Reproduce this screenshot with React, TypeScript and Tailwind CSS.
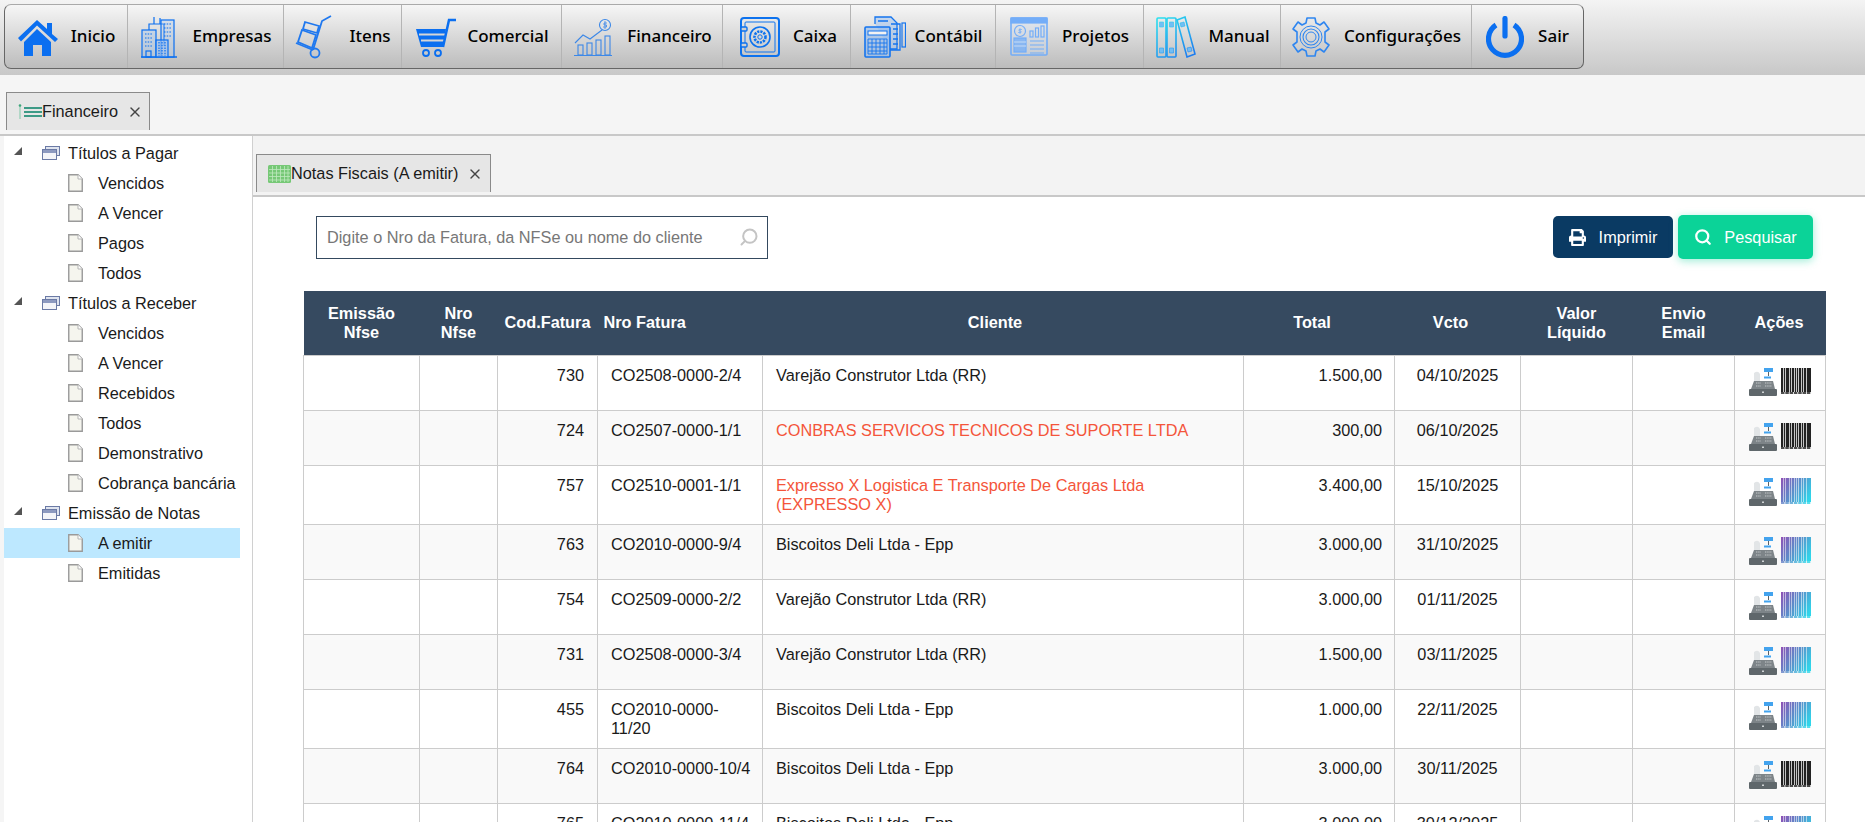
import { useId } from "react";
import { FaPrint } from "react-icons/fa";
import { Search, X } from "lucide-react";

const BLUE = "#0b6ff0";

function HomeIcon() {
  return (
    <svg width="42" height="38" viewBox="0 0 42 38">
      <path d="M1 20 L20 2 L30 11 V5 H35 V16 L41 21 L38 24 L20 7.5 L4 23.5 Z" fill={BLUE} />
      <path d="M7 24 L20 11 L34 24 V38 H25 V27 H16 V38 H7 Z" fill={BLUE} />
    </svg>
  );
}

function BuildingIcon() {
  return (
    <svg width="38" height="42" viewBox="0 0 38 42" fill="none" stroke={BLUE} strokeWidth="1.2">
      <path d="M1 41 H37" strokeWidth="1.6" />
      <rect x="2" y="14" width="14" height="27" fill="#9cc2f3" fillOpacity="0.35" />
      <path d="M9 14 V8 H20 V2 M14 1 V8 M20 8 H24 V30" />
      <rect x="21" y="4" width="13" height="37" fill="#9cc2f3" fillOpacity="0.25" />
      <rect x="16" y="24" width="12" height="17" fill="#9cc2f3" fillOpacity="0.6" />
      <path d="M5 18 H13 M5 22 H13 M5 26 H13 M5 30 H13 M24 8 H31 M24 12 H31 M24 16 H31 M24 20 H31 M19 26 V40 M22 26 V40 M25 26 V40" strokeDasharray="1.5 1.2" />
      <rect x="6" y="35" width="5" height="6" />
    </svg>
  );
}

function TrolleyIcon() {
  return (
    <svg width="40" height="44" viewBox="0 0 38 44" fill="none" stroke="#1f78ef" strokeWidth="1.8">
      <path d="M36 1 L27 6 L18 35" />
      <path d="M1 28 L18 35" />
      <path d="M10 7 L24 11 L22 18 L8 14 Z" />
      <path d="M7 15 L21 20 L17 33 L3 27 Z" />
      <circle cx="20" cy="38" r="4.5" />
    </svg>
  );
}

function CartIcon() {
  return (
    <svg width="44" height="40" viewBox="0 0 42 40" fill="none">
      <path d="M1 12 H31 L28 30 H6 Z" fill={BLUE} />
      <path d="M4 17.5 H30 M6 23.5 H29" stroke="#d6d6d6" strokeWidth="2" />
      <path d="M28 30 L34 3 H41" stroke={BLUE} strokeWidth="2.5" />
      <circle cx="11" cy="36" r="3" stroke={BLUE} strokeWidth="1.8" />
      <circle cx="23" cy="36" r="3" stroke={BLUE} strokeWidth="1.8" />
    </svg>
  );
}

function FinanceIcon() {
  return (
    <svg width="38" height="38" viewBox="0 0 38 38" fill="none" stroke="#3c88e8" strokeWidth="1.1">
      <circle cx="31" cy="7" r="5.5" />
      <path d="M31 3 V11 M33 5 H30 V7 H32.5 V9 H29" strokeWidth="0.8" />
      <path d="M1 25 L9 17 L16 21 L28 12" />
      <rect x="4" y="27" width="5" height="10" />
      <rect x="13" y="25" width="5" height="12" />
      <rect x="22" y="22" width="5" height="15" />
      <rect x="31" y="18" width="5" height="19" />
      <path d="M0 37.5 H38" />
    </svg>
  );
}

function SafeIcon() {
  return (
    <svg width="40" height="40" viewBox="0 0 40 40" fill="none" stroke="#0d72ee">
      <rect x="1" y="1" width="38" height="38" rx="3" strokeWidth="2" />
      <rect x="5" y="5" width="30" height="30" rx="1" strokeWidth="1" />
      <rect x="1" y="10" width="6" height="4" rx="1" fill="#d0d0d0" strokeWidth="1.4" />
      <rect x="1" y="26" width="6" height="4" rx="1" fill="#d0d0d0" strokeWidth="1.4" />
      <circle cx="20" cy="20" r="10" strokeWidth="1.6" />
      <circle cx="20" cy="20" r="5.5" strokeWidth="2.6" strokeDasharray="2.2 1" />
      <circle cx="20" cy="20" r="2.2" strokeWidth="1" />
    </svg>
  );
}

function AccountingIcon() {
  return (
    <svg width="42" height="42" viewBox="0 0 42 42" fill="none" stroke="#1474ee" strokeWidth="1.3">
      <path d="M11 8 V1 H27 L33 7 V33 H26" fill="#8db9f2" fillOpacity="0.4" />
      <path d="M27 8 H36 V34 H26 M14 5 H24 M29 13 H34 M29 18 H34 M29 23 H34 M29 28 H34" />
      <rect x="38" y="7" width="3.5" height="24" strokeWidth="1.2" />
      <rect x="1" y="11" width="25" height="30" rx="1" fill="#8db9f2" fillOpacity="0.55" strokeWidth="1.6" />
      <rect x="4" y="15" width="19" height="4" fill="#f2f2f2" strokeWidth="1" />
      <path d="M4 23 H23 V38 H4 Z M4 27 H23 M4 31 H23 M4 35 H23 M8 23 V38 M12 23 V38 M16 23 V38 M20 23 V38" strokeWidth="0.9" />
    </svg>
  );
}

function ProjectsIcon() {
  return (
    <svg width="38" height="40" viewBox="0 0 38 40" fill="none" stroke="#73adf8" strokeWidth="1.2">
      <rect x="1" y="1" width="36" height="37" rx="1" fill="#c6dbf6" fillOpacity="0.25" strokeWidth="1.6" />
      <rect x="1" y="1" width="36" height="5" fill="#73adf8" />
      <circle cx="10" cy="14" r="5.5" />
      <path d="M10 11 V17 M12 12.5 H9 V14 H11 V15.5 H8" strokeWidth="0.7" />
      <rect x="4" y="21" width="12" height="14" fill="#73adf8" fillOpacity="0.75" />
      <path d="M4 25 H16 M4 29 H16" stroke="#c6dbf6" />
      <rect x="20" y="14" width="3" height="6" />
      <rect x="25.5" y="11" width="3" height="9" />
      <rect x="31" y="9" width="3" height="11" />
      <path d="M20 24 H34 M20 28 H34 M20 32 H34 M20 36 H34" />
    </svg>
  );
}

function BindersIcon() {
  const id = useId();
  const stroke = `url(#${id})`;
  return (
    <svg width="42" height="42" viewBox="0 0 40 42" fill="none" stroke={stroke} strokeWidth="1.6">
      <defs>
        <linearGradient id={id} gradientUnits="userSpaceOnUse" x1="4" y1="1" x2="30" y2="42">
          <stop offset="0" stopColor="#2ae0ee" />
          <stop offset="1" stopColor="#1d7df0" />
        </linearGradient>
      </defs>
      <rect x="1" y="2" width="9" height="39" rx="1" />
      <rect x="11" y="2" width="9" height="39" rx="1" />
      <path d="M21 4 L29 1 L39 38 L31 41 Z" />
      <path d="M3.5 6 H7.5 V11 H3.5 Z M13.5 6 H17.5 V11 H13.5 Z M3.5 32 H7.5 V37 H3.5 Z M13.5 32 H17.5 V37 H13.5 Z M24 7 L28 6 L29 10 L25 11 Z M31 32 L35 31 L36 35 L32 36 Z" fill="#72bdf4" strokeWidth="0.6" />
    </svg>
  );
}

function GearIcon() {
  return (
    <svg width="40" height="42" viewBox="0 0 40 42" fill="none" stroke="#2f86f0" strokeWidth="1.6">
      <path d="M16 2 H24 L25 7 L29 9 L33 6 L38 13 L34 16 V26 L38 29 L33 36 L29 33 L25 35 L24 40 H16 L15 35 L11 33 L7 36 L2 29 L6 26 V16 L2 13 L7 6 L11 9 L15 7 Z" strokeLinejoin="round" />
      <circle cx="20" cy="21" r="11" strokeWidth="1" />
      <circle cx="20" cy="21" r="8" strokeWidth="1.1" />
      <circle cx="20" cy="21" r="5" strokeWidth="1" />
    </svg>
  );
}

function PowerIcon() {
  return (
    <svg width="38" height="42" viewBox="0 0 38 42" fill="none" stroke={BLUE}>
      <path d="M10 9 A16.5 16.5 0 1 0 28 9" strokeWidth="5.2" />
      <path d="M19 2.5 V20" strokeWidth="5.2" strokeLinecap="round" />
    </svg>
  );
}

const menu = [
  { label: "Inicio", width: "w-[123px]", gap: "gap-[12px]", icon: <HomeIcon /> },
  { label: "Empresas", width: "w-[156px]", gap: "gap-[15px]", icon: <BuildingIcon /> },
  { label: "Itens", width: "w-[118px]", gap: "gap-[15px]", icon: <TrolleyIcon /> },
  { label: "Comercial", width: "w-[160px]", gap: "gap-[9px]", icon: <CartIcon /> },
  { label: "Financeiro", width: "w-[161px] pl-[2px]", gap: "gap-[15px]", icon: <FinanceIcon /> },
  { label: "Caixa", width: "w-[128px] pl-[4px]", gap: "gap-[13px]", icon: <SafeIcon /> },
  { label: "Contábil", width: "w-[145px]", gap: "gap-[9px]", icon: <AccountingIcon /> },
  { label: "Projetos", width: "w-[148px]", gap: "gap-[14px]", icon: <ProjectsIcon /> },
  { label: "Manual", width: "w-[137px]", gap: "gap-[12px]", icon: <BindersIcon /> },
  { label: "Configurações", width: "w-[191px]", gap: "gap-[13px]", icon: <GearIcon /> },
  { label: "Sair", width: "w-[111px]", gap: "gap-[14px]", icon: <PowerIcon /> },
];

const tree = [
  { label: "Títulos a Pagar", root: true },
  { label: "Vencidos" },
  { label: "A Vencer" },
  { label: "Pagos" },
  { label: "Todos" },
  { label: "Títulos a Receber", root: true },
  { label: "Vencidos" },
  { label: "A Vencer" },
  { label: "Recebidos" },
  { label: "Todos" },
  { label: "Demonstrativo" },
  { label: "Cobrança bancária" },
  { label: "Emissão de Notas", root: true },
  { label: "A emitir", selected: true },
  { label: "Emitidas" },
];

const rows = [
  { cod: "730", nro: "CO2508-0000-2/4", cliente: "Varejão Construtor Ltda (RR)", total: "1.500,00", vcto: "04/10/2025", color: false },
  { cod: "724", nro: "CO2507-0000-1/1", cliente: "CONBRAS SERVICOS TECNICOS DE SUPORTE LTDA", total: "300,00", vcto: "06/10/2025", color: false, red: true },
  { cod: "757", nro: "CO2510-0001-1/1", cliente: "Expresso X Logistica E Transporte De Cargas Ltda (EXPRESSO X)", total: "3.400,00", vcto: "15/10/2025", color: true, red: true },
  { cod: "763", nro: "CO2010-0000-9/4", cliente: "Biscoitos Deli Ltda - Epp", total: "3.000,00", vcto: "31/10/2025", color: true },
  { cod: "754", nro: "CO2509-0000-2/2", cliente: "Varejão Construtor Ltda (RR)", total: "3.000,00", vcto: "01/11/2025", color: true },
  { cod: "731", nro: "CO2508-0000-3/4", cliente: "Varejão Construtor Ltda (RR)", total: "1.500,00", vcto: "03/11/2025", color: true },
  { cod: "455", nro: "CO2010-0000-11/20", cliente: "Biscoitos Deli Ltda - Epp", total: "1.000,00", vcto: "22/11/2025", color: true },
  { cod: "764", nro: "CO2010-0000-10/4", cliente: "Biscoitos Deli Ltda - Epp", total: "3.000,00", vcto: "30/11/2025", color: false },
  { cod: "765", nro: "CO2010-0000-11/4", cliente: "Biscoitos Deli Ltda - Epp", total: "3.000,00", vcto: "30/12/2025", color: true },
];

function TreeArrow() {
  return (
    <svg width="8" height="8" viewBox="0 0 8 8" className="-mt-[4px] shrink-0">
      <path d="M8 0 V8 H0 Z" fill="#555" />
    </svg>
  );
}

function FolderIcon() {
  return (
    <svg width="18" height="14" viewBox="0 0 18 14" className="shrink-0">
      <rect x="3.5" y="0.5" width="14" height="9" fill="#dfe4ef" stroke="#6b7aa5" />
      <rect x="0.5" y="3.5" width="14" height="10" fill="#f4f5f9" stroke="#6b7aa5" />
      <rect x="1" y="4" width="13" height="3" fill="#8d9ac0" />
    </svg>
  );
}

function PageIcon() {
  return (
    <svg width="15" height="18" viewBox="0 0 15 18" className="shrink-0">
      <path d="M0.75 0.75 H10 L14.25 5 V17.25 H0.75 Z" fill="#f5f5ee" stroke="#9a9a9a" strokeWidth="1.4" />
      <path d="M10 0.75 V5 H14.25" fill="#fff" stroke="#b5b5b5" />
    </svg>
  );
}

function GridIcon() {
  return (
    <svg width="23" height="18" viewBox="0 0 23 18" className="shrink-0">
      <rect width="23" height="18" rx="1.5" fill="#76c876" />
      <path d="M1 4.5 H22 M1 8 H22 M1 11.5 H22 M1 15 H22 M4.5 1 V17 M8.5 1 V17 M12.5 1 V17 M16.5 1 V17 M20 1 V17" stroke="#bfe8bf" strokeWidth="0.8" />
    </svg>
  );
}

function ListIcon() {
  return (
    <svg width="24" height="16" viewBox="0 0 24 16" className="shrink-0">
      <path d="M2 1 V15" stroke="#7fc9a8" strokeWidth="1" />
      <circle cx="2" cy="1.5" r="1.3" fill="#3fa57c" />
      <path d="M6 4 H24 M6 8 H24 M6 12 H24" stroke="#3d9a86" strokeWidth="2" />
    </svg>
  );
}

function RegisterIcon() {
  return (
    <svg width="28" height="28" viewBox="0 0 28 28" className="shrink-0">
      <rect x="15" y="0" width="9" height="4" fill="#43a3ee" />
      <path d="M19.5 4 V8" stroke="#5a6266" strokeWidth="1" />
      <path d="M5 13 V5 Q9 2 11 6 V13 Z" fill="#e2e5e7" />
      <rect x="15" y="8.5" width="7" height="2" fill="#43a3ee" />
      <path d="M5 13 H24 L26 21 H2 Z" fill="#7d8488" />
      <path d="M7 15 H12 M7 18 H12 M16 15 H23 M16 18 H23" stroke="#c4c8ca" strokeWidth="1" strokeDasharray="1.4 0.8" />
      <rect x="0" y="21" width="28" height="7" rx="1" fill="#5f676b" />
      <rect x="13" y="23.5" width="2" height="1.5" fill="#cfd3d5" />
    </svg>
  );
}

const bars: [number, number][] = [
  [0, 2], [3, 1], [5, 3], [9, 1], [11, 2], [14, 1], [16, 1], [18, 2], [21, 1], [23, 2], [26, 4],
];

function BarcodeIcon({ color }: { color: boolean }) {
  const id = useId();
  const fill = color ? `url(#${id})` : "#222";
  return (
    <svg width="30" height="26" viewBox="0 0 30 26" className="shrink-0">
      <defs>
        <linearGradient id={id} gradientUnits="userSpaceOnUse" x1="0" y1="0" x2="30" y2="18">
          <stop offset="0" stopColor="#8f4fb5" />
          <stop offset="0.5" stopColor="#5b8fcb" />
          <stop offset="1" stopColor="#2fd6ea" />
        </linearGradient>
      </defs>
      <rect width="30" height="24" fill={fill} opacity={color ? 0.45 : 0.25} />
      {bars.map(([x, w]) => (
        <rect key={x} x={x} width={w} height="24" fill={fill} />
      ))}
      <path d="M0 25 H30" stroke={fill} strokeWidth="2" strokeDasharray="3.5 0.8" opacity="0.8" />
    </svg>
  );
}

export default function App() {
  return (
    <div className="h-screen overflow-hidden bg-[#f5f5f5] font-['Liberation_Sans',Arial,sans-serif] text-[16.3px] text-[#1a1a1a]">
      {/* Top menu */}
      <div className="h-[75px] bg-gradient-to-b from-[#f4f4f4] to-[#c8c8c8] pt-[4px] pl-[4px]">
        <div className="flex h-[65px] w-max rounded-[7px] border border-[#666] border-t-[#aaa] bg-gradient-to-b from-[#f6f6f6] to-[#bcbcbc]">
          {menu.map((item, i) => (
            <div
              key={item.label}
              className={`flex items-center justify-center border-[#b4b4b4] ${item.gap} ${item.width} ${i < menu.length - 1 ? "border-r" : ""}`}
            >
              {item.icon}
              <span className="pb-[2px] font-['Noto_Sans',sans-serif] text-[17px] font-medium text-black">{item.label}</span>
            </div>
          ))}
        </div>
      </div>

      {/* Module tab */}
      <div className="h-[61px] border-b-2 border-[#c8c8c8] pt-[17px] pl-[6px]">
        <div className="flex h-[38px] w-[144px] items-center border border-b-0 border-[#8a8a8a] bg-[#e6e6e6] pl-[11px]">
          <ListIcon />
          <span>Financeiro</span>
          <X size={16} strokeWidth={2} className="ml-[9px] text-[#444]" />
        </div>
      </div>

      <div className="flex h-[686px]">
        {/* Tree */}
        <aside className="ml-[4px] w-[249px] shrink-0 border-r border-[#d0d0d0] bg-white pt-[2px]">
          {tree.map((node, i) => (
            <div
              key={i}
              className={`flex h-[30px] w-[236px] items-center ${node.selected ? "bg-[#bde8ff]" : ""} ${node.root ? "pl-[10px]" : "pl-[64px]"}`}
            >
              {node.root ? (
                <>
                  <TreeArrow />
                  <span className="ml-[20px]">
                    <FolderIcon />
                  </span>
                  <span className="ml-[8px] whitespace-nowrap">{node.label}</span>
                </>
              ) : (
                <>
                  <PageIcon />
                  <span className="ml-[15px] whitespace-nowrap">{node.label}</span>
                </>
              )}
            </div>
          ))}
        </aside>

        <main className="min-w-0 flex-1 bg-white">
          <div className="h-[61px] border-b-2 border-[#c8c8c8] bg-[#f3f3f3] pt-[18px] pl-[3px]">
            <div className="flex h-[38px] w-[235px] items-center border border-b-0 border-[#8a8a8a] bg-[#e6e6e6] pl-[11px]">
              <GridIcon />
              <span className="whitespace-nowrap">Notas Fiscais (A emitir)</span>
              <X size={16} strokeWidth={2} className="ml-[9px] text-[#444]" />
            </div>
          </div>

          {/* Search bar */}
          <div className="flex items-center pt-[18px] pr-[52px] pl-[63px]">
            <div className="flex h-[43px] w-[452px] items-center justify-between border border-[#34495e] pr-[8px] pl-[10px]">
              <span className="text-[#777]">Digite o Nro da Fatura, da NFSe ou nome do cliente</span>
              <Search size={20} strokeWidth={2.4} className="scale-x-[-1] text-[#c4c4c4]" />
            </div>
            <button className="ml-auto flex h-[42px] w-[120px] items-center justify-center gap-[13px] rounded-[5px] bg-[#0a3a63] text-white">
              <FaPrint size={17} />
              Imprimir
            </button>
            <button className="ml-[5px] flex h-[44px] w-[135px] items-center justify-center gap-[12px] rounded-[5px] bg-[#0bd398] text-white shadow-[0_2px_8px_rgba(11,211,152,0.4)]">
              <Search size={18} strokeWidth={3} />
              Pesquisar
            </button>
          </div>

          {/* Invoices */}
          <table className="mt-[32px] ml-[50px] w-[1522px] table-fixed border-collapse">
            <colgroup>
              <col className="w-[116px]" />
              <col className="w-[78px]" />
              <col className="w-[100px]" />
              <col className="w-[165px]" />
              <col className="w-[481px]" />
              <col className="w-[151px]" />
              <col className="w-[126px]" />
              <col className="w-[112px]" />
              <col className="w-[102px]" />
              <col className="w-[91px]" />
            </colgroup>
            <thead>
              <tr className="h-[64px] bg-[#364a60] leading-[19px] text-white">
                <th className="px-[8px] font-bold">Emissão Nfse</th>
                <th className="px-[8px] font-bold">Nro Nfse</th>
                <th className="px-[2px] font-bold">Cod.Fatura</th>
                <th className="px-[6px] text-left font-bold">Nro Fatura</th>
                <th className="pr-[16px] font-bold">Cliente</th>
                <th className="pr-[14px] font-bold">Total</th>
                <th className="pr-[14px] font-bold">Vcto</th>
                <th className="px-[8px] font-bold">Valor Líquido</th>
                <th className="px-[8px] font-bold">Envio Email</th>
                <th className="pr-[2px] font-bold">Ações</th>
              </tr>
            </thead>
            <tbody>
              {rows.map((row, i) => (
                <tr key={row.cod} className={`align-top leading-[19px] ${i % 2 === 1 ? "bg-[#f9f9f9]" : "bg-white"}`}>
                  <td className="h-[55px] border border-[#ccc]" />
                  <td className="border border-[#ccc]" />
                  <td className="border border-[#ccc] pt-[10px] pr-[13px] pb-[10px] text-right">{row.cod}</td>
                  <td className="border border-[#ccc] pt-[10px] pr-[11px] pb-[10px] pl-[13px]">{row.nro}</td>
                  <td className={`border border-[#ccc] px-[13px] pt-[10px] pb-[10px] ${row.red ? "text-[#f4553b]" : ""}`}>{row.cliente}</td>
                  <td className="border border-[#ccc] pt-[10px] pr-[12px] pb-[10px] text-right">{row.total}</td>
                  <td className="border border-[#ccc] pt-[10px] pb-[10px] text-center">{row.vcto}</td>
                  <td className="border border-[#ccc]" />
                  <td className="border border-[#ccc]" />
                  <td className="border border-[#ccc] pt-[12px]">
                    <div className="flex justify-center gap-[4px] pr-[1px]">
                      <RegisterIcon />
                      <BarcodeIcon color={row.color} />
                    </div>
                  </td>
                </tr>
              ))}
            </tbody>
          </table>
        </main>
      </div>
    </div>
  );
}
